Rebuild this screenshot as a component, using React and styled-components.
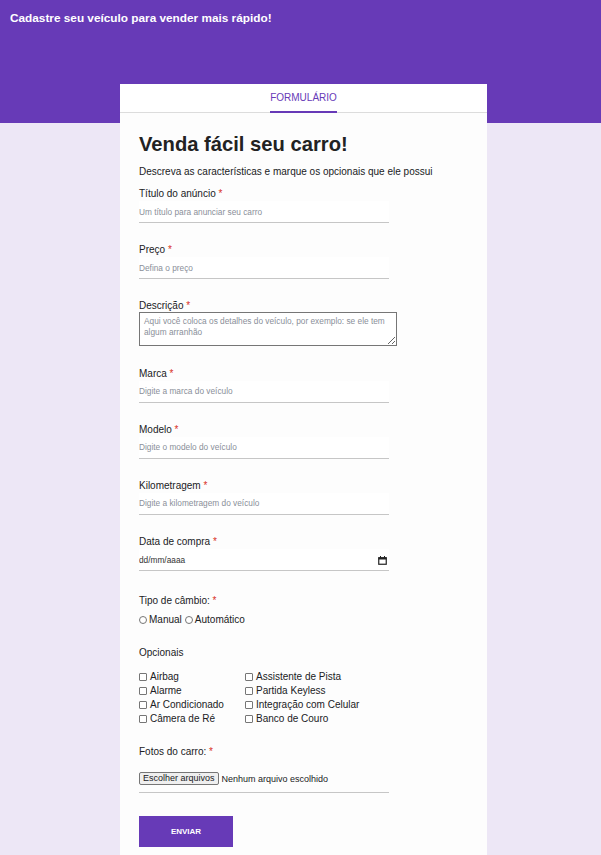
import React from 'react';
import styled, { createGlobalStyle } from 'styled-components';

const GlobalStyle = createGlobalStyle`
  html, body {
    margin: 0;
    padding: 0;
    background-color: #ede7f6;
    font-family: "Liberation Sans", Arial, sans-serif;
    color: #202124;
  }
`;

const Header = styled.header`
  background-color: #673ab7;
  height: 123px;
  padding: 11px 10px 0;
  box-sizing: border-box;
`;

const HeaderTitle = styled.h1`
  margin: 0;
  font-size: 11.8px;
  line-height: 14px;
  font-weight: bold;
  color: #ffffff;
`;

const Card = styled.main`
  width: 367px;
  margin: -39px 0 0 120px;
  background-color: #fdfdfd;
  min-height: 771px;
`;

const TabBar = styled.nav`
  display: flex;
  justify-content: center;
  height: 28px;
  border-bottom: 1px solid #dcdcdc;
  background-color: #ffffff;
`;

const Tab = styled.div`
  font-size: 10px;
  line-height: 27px;
  color: #673ab7;
  text-transform: uppercase;
  border-bottom: 2px solid ${(p) => (p.$active ? '#673ab7' : 'transparent')};
  margin-bottom: -1px;
`;

const Content = styled.form`
  padding: 18px 19px 10px;
`;

const Heading = styled.h2`
  margin: 0;
  font-size: 20.2px;
  line-height: 26px;
  font-weight: bold;
  color: #222;
`;

const Subtitle = styled.p`
  margin: 8px 0 8px;
  font-size: 10px;
  line-height: 14px;
`;

const Field = styled.div`
  margin-bottom: ${(p) => (p.$gap === undefined ? 20.2 : p.$gap)}px;
`;

const Label = styled.label`
  display: block;
  font-size: 10px;
  line-height: 14px;
  color: #202124;
`;

const Required = styled.span`
  color: #d93025;
`;

const TextInput = styled.input`
  display: block;
  box-sizing: border-box;
  width: 250px;
  height: 22px;
  padding: 0;
  border: none;
  border-bottom: 1px solid #c6c6c6;
  background-color: #ffffff;
  font-family: inherit;
  font-size: 8.3px;
  outline: none;

  &::placeholder {
    color: ${(p) => (p.$dark ? '#333' : '#8a8f99')};
  }
`;

const TextArea = styled.textarea`
  display: block;
  box-sizing: border-box;
  width: 258px;
  height: 34px;
  margin-top: -1px;
  padding: 3px 4px;
  border: 1px solid #767676;
  background-color: #ffffff;
  font-family: inherit;
  font-size: 8.3px;
  line-height: 11px;
  resize: both;

  &::placeholder {
    color: #8a8f99;
  }
`;

const DateWrap = styled.div`
  position: relative;
  width: 250px;
`;

const CalendarIcon = styled.svg`
  position: absolute;
  right: 2px;
  top: 7px;
`;

const OptionRow = styled.div`
  display: flex;
  align-items: center;
  margin-top: 5px;
  font-size: 10px;
  line-height: 14px;
`;

const Option = styled.label`
  display: inline-flex;
  align-items: center;
  margin-right: 3px;
`;

const Radio = styled.input`
  appearance: none;
  width: 8px;
  height: 8px;
  margin: 0 2px 0 0;
  border: 1px solid #767676;
  border-radius: 50%;
  background: #fff;
`;

const Check = styled.input`
  appearance: none;
  width: 8px;
  height: 8px;
  margin: 0 3px 0 0;
  border: 1px solid #767676;
  border-radius: 1px;
  background: #fff;
`;

const CheckGrid = styled.div`
  display: grid;
  grid-template-columns: 106px auto;
  margin-top: 10px;
  font-size: 10px;
  line-height: 14px;
`;

const FileRow = styled.div`
  display: flex;
  align-items: center;
  width: 250px;
  height: 27px;
  margin-top: 6px;
  border-bottom: 1px solid #c6c6c6;
  font-size: 9px;
`;

const FileButton = styled.button`
  font-family: inherit;
  font-size: 9px;
  line-height: 11px;
  padding: 0 3px;
  margin-right: 3px;
  border: 1px solid #767676;
  border-radius: 2px;
  background: #efefef;
  color: #202124;
`;

const SubmitButton = styled.button`
  display: block;
  width: 94px;
  height: 31px;
  margin-top: 23px;
  border: none;
  background-color: #673ab7;
  color: #ffffff;
  font-family: inherit;
  font-size: 8px;
  font-weight: bold;
`;

const textFields = [
  { label: 'Título do anúncio', placeholder: 'Um título para anunciar seu carro' },
  { label: 'Preço', placeholder: 'Defina o preço' },
];

const moreFields = [
  { label: 'Marca', placeholder: 'Digite a marca do veículo' },
  { label: 'Modelo', placeholder: 'Digite o modelo do veículo' },
  { label: 'Kilometragem', placeholder: 'Digite a kilometragem do veículo' },
];

const extras = [
  'Airbag',
  'Assistente de Pista',
  'Alarme',
  'Partida Keyless',
  'Ar Condicionado',
  'Integração com Celular',
  'Câmera de Ré',
  'Banco de Couro',
];

const App = () => {
  return (
    <>
      <GlobalStyle />
      <Header>
        <HeaderTitle>Cadastre seu veículo para vender mais rápido!</HeaderTitle>
      </Header>
      <Card>
        <TabBar>
          <Tab $active>Formulário</Tab>
        </TabBar>
        <Content onSubmit={(e) => e.preventDefault()}>
          <Heading>Venda fácil seu carro!</Heading>
          <Subtitle>Descreva as características e marque os opcionais que ele possui</Subtitle>

          {textFields.map((f) => (
            <Field key={f.label}>
              <Label>
                {f.label} <Required>*</Required>
              </Label>
              <TextInput type="text" placeholder={f.placeholder} />
            </Field>
          ))}

          <Field>
            <Label>
              Descrição <Required>*</Required>
            </Label>
            <TextArea placeholder="Aqui você coloca os detalhes do veículo, por exemplo: se ele tem algum arranhão" />
          </Field>

          {moreFields.map((f) => (
            <Field key={f.label}>
              <Label>
                {f.label} <Required>*</Required>
              </Label>
              <TextInput type="text" placeholder={f.placeholder} />
            </Field>
          ))}

          <Field $gap={23}>
            <Label>
              Data de compra <Required>*</Required>
            </Label>
            <DateWrap>
              <TextInput type="text" placeholder="dd/mm/aaaa" $dark />
              <CalendarIcon width="9" height="9" viewBox="0 0 9 9">
                <rect x="0.75" y="1.75" width="7.5" height="6.5" fill="none" stroke="#222" strokeWidth="1.2" />
                <rect x="0.5" y="1.5" width="8" height="2" fill="#222" />
                <rect x="2" y="0" width="1" height="2" fill="#222" />
                <rect x="6" y="0" width="1" height="2" fill="#222" />
              </CalendarIcon>
            </DateWrap>
          </Field>

          <Field $gap={19}>
            <Label>
              Tipo de câmbio: <Required>*</Required>
            </Label>
            <OptionRow>
              <Option>
                <Radio type="radio" name="cambio" />
                Manual
              </Option>
              <Option>
                <Radio type="radio" name="cambio" />
                Automático
              </Option>
            </OptionRow>
          </Field>

          <Field $gap={19}>
            <Label>Opcionais</Label>
            <CheckGrid>
              {extras.map((item) => (
                <Option key={item}>
                  <Check type="checkbox" />
                  {item}
                </Option>
              ))}
            </CheckGrid>
          </Field>

          <Field $gap={0}>
            <Label>
              Fotos do carro: <Required>*</Required>
            </Label>
            <FileRow>
              <FileButton type="button">Escolher arquivos</FileButton>
              Nenhum arquivo escolhido
            </FileRow>
          </Field>

          <SubmitButton type="submit">ENVIAR</SubmitButton>
        </Content>
      </Card>
    </>
  );
};

export default App;
